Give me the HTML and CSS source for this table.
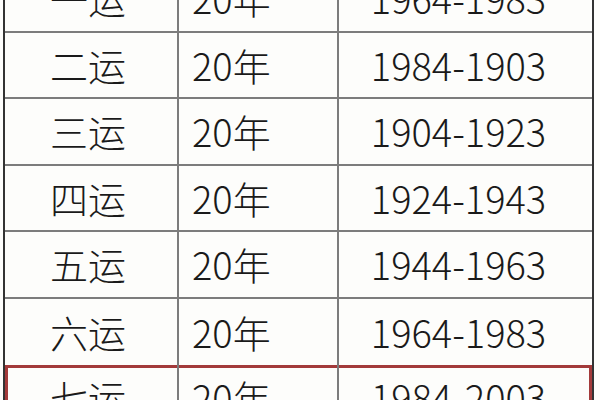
FILE: index.html
```html
<!DOCTYPE html>
<html lang="zh">
<head>
<meta charset="utf-8">
<title>三元九运</title>
<link rel="stylesheet" href="styles.css">
</head>
<body>
<div class="frame">
  <table class="luck">
    <colgroup>
      <col class="c1">
      <col class="c2">
      <col class="c3">
    </colgroup>
    <tr><td class="yun">一运</td><td class="yrs">20年</td><td class="span">1964-1983</td></tr>
    <tr><td class="yun">二运</td><td class="yrs">20年</td><td class="span">1984-1903</td></tr>
    <tr><td class="yun">三运</td><td class="yrs">20年</td><td class="span">1904-1923</td></tr>
    <tr><td class="yun">四运</td><td class="yrs">20年</td><td class="span">1924-1943</td></tr>
    <tr><td class="yun">五运</td><td class="yrs">20年</td><td class="span">1944-1963</td></tr>
    <tr class="before-hl"><td class="yun">六运</td><td class="yrs">20年</td><td class="span">1964-1983</td></tr>
    <tr class="hl"><td class="yun">七运</td><td class="yrs">20年</td><td class="span">1984-2003</td></tr>
  </table>
</div>
</body>
</html>
```

FILE: styles.css
```css
html, body {
  margin: 0;
  padding: 0;
  background: #fdfdfb;
}

.frame {
  width: 600px;
  height: 400px;
  overflow: hidden;
}

.luck {
  border-collapse: separate;
  border-spacing: 0;
  table-layout: fixed;
  width: 591px;
  margin: -34px 0 0 3px;
  border-left: 2px solid #333333;
  border-right: 2px solid #333333;
  font-family: "Noto Sans CJK SC", "Noto Sans", sans-serif;
  font-weight: 300;
  font-size: 38px;
  color: #1a1a1a;
}

.c1 { width: 174px; }
.c2 { width: 160px; }
.c3 { width: auto; }

.luck td {
  box-sizing: border-box;
  height: 66.5px;
  padding: 0;
  line-height: 1;
  vertical-align: middle;
  border-bottom: 2px solid #7c7c7c;
  white-space: nowrap;
}

.luck td.yun {
  text-align: center;
  border-right: 2px solid #7c7c7c;
  padding-right: 6px;
}

.luck td.yrs {
  text-align: left;
  padding-left: 13px;
  border-right: 2px solid #7c7c7c;
}

.luck td.span {
  text-align: center;
  padding-right: 14px;
}

.before-hl td {
  border-bottom: none;
}

.hl td {
  box-shadow: inset 0 3px 0 #a33a3a;
}

.hl td.yun {
  box-shadow: inset 0 3px 0 #a33a3a, inset 3px 0 0 #a33a3a;
}

.hl td.span {
  box-shadow: inset 0 3px 0 #a33a3a, inset -3px 0 0 #a33a3a;
}
```
